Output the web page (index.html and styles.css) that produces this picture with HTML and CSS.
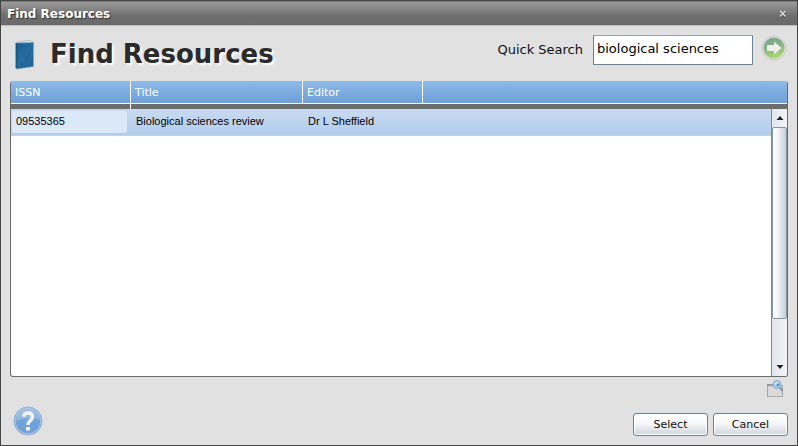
FILE: index.html
```
<!DOCTYPE html>
<html lang="en">
<head>
<meta charset="utf-8">
<title>Find Resources</title>
<link rel="stylesheet" href="styles.css">
</head>
<body>
<div class="dialog" role="dialog" aria-labelledby="heading">
  <header class="titlebar">
    <span>Find Resources</span>
    <button class="close" type="button" aria-label="Close">
      <svg width="8" height="8" viewBox="0 0 8 8"><path d="M1 2l5.500 5.500M6.500 2L1 7.500" stroke="#444" stroke-width="1.500"/><path d="M1 1l5.500 5.500M6.500 1L1 6.500" stroke="#ddd" stroke-width="1.500"/></svg>
    </button>
  </header>
  <main class="content">
    <div class="top">
      <svg class="book" width="22" height="30" viewBox="0 0 22 30">
        <defs><linearGradient id="bk" x1="0" x2="1" y1="0" y2="1"><stop offset="0" stop-color="#1b5c8f"/><stop offset=".5" stop-color="#256b9f"/><stop offset="1" stop-color="#155481"/></linearGradient></defs>
        <path d="M2 2.500L15 .500L19.500 2L19 4L2 4z" fill="#e8efef" stroke="#8fa9b4" stroke-width=".7"/>
        <path d="M1.500 3L19.500 2.500V26.500L3 29L1.500 28z" fill="url(#bk)" stroke="#7fa8c2" stroke-width=".6"/>
        <path d="M3 3.500V28.500" stroke="#124a74" stroke-width=".7"/>
        <path d="M4 8Q7 20 12 27.500L19 26V5Q17 16 12 22Q8 18 4 8z" fill="#3b82b5" opacity=".3"/>
      </svg>
      <h1 id="heading">Find Resources</h1>
      <form class="search">
        <label for="q">Quick Search</label>
        <input id="q" type="text" value="biological sciences">
        <button class="go" type="button" aria-label="Search">
          <svg width="26" height="26" viewBox="0 0 26 26">
            <defs><linearGradient id="gn" x1="0" x2=".3" y1="0" y2="1"><stop offset="0" stop-color="#7da596"/><stop offset=".5" stop-color="#82b084"/><stop offset="1" stop-color="#a9d66f"/></linearGradient></defs>
            <circle cx="13" cy="13" r="12" fill="#e4e4e4" stroke="#c6c6c6"/>
            <circle cx="13" cy="13" r="10.500" fill="url(#gn)"/>
            <path d="M6 10h7V6.500l7.500 6.500l-7.500 6.500V16H6z" fill="#eee"/>
          </svg>
        </button>
      </form>
    </div>
    <section class="grid">
      <table>
        <colgroup><col class="c-issn"><col class="c-title"><col class="c-editor"><col></colgroup>
        <thead>
          <tr><th>ISSN</th><th>Title</th><th>Editor</th><th></th></tr>
        </thead>
        <tbody>
          <tr><td class="focus"><span>09535365</span></td><td>Biological sciences review</td><td>Dr L Sheffield</td><td></td></tr>
        </tbody>
      </table>
      <div class="scrollbar">
        <button type="button" aria-label="Scroll up"><svg width="8" height="4" viewBox="0 0 8 4"><path d="M4 0L7.500 4H.5z" fill="#222"/></svg></button>
        <div class="track"><div class="thumb"></div></div>
        <button type="button" aria-label="Scroll down"><svg width="8" height="4" viewBox="0 0 8 4"><path d="M.5 0h7L4 4z" fill="#222"/></svg></button>
      </div>
    </section>
    <div class="tools">
      <button type="button" aria-label="Preview folder">
        <svg width="18" height="18" viewBox="0 0 18 18">
          <path d="M1.500 4.500h6l1 1h8v11h-15z" fill="#ccc" stroke="#a6a6a6"/>
          <path d="M2 7h14v9H2z" fill="#dadada"/>
          <path d="M1 5h6" stroke="#999" stroke-width="2"/>
          <path d="M1 16.500h16" stroke="#aaa"/>
          <path d="M13 6.500l3.500 4.500" stroke="#7795b5" stroke-width="2"/>
          <circle cx="11" cy="4.500" r="4" fill="#a9d0ef" stroke="#87a7c7"/>
          <path d="M9 4q1-2 3-1.500" stroke="#eef7ff" fill="none"/>
          <path d="M11 6l2-2" stroke="#4e8fd0" stroke-width="2"/>
        </svg>
      </button>
    </div>
    <footer>
      <button class="help" type="button" aria-label="Help">
        <svg width="30" height="30" viewBox="0 0 30 30">
          <defs><linearGradient id="hp" x1="0" x2="0" y1="0" y2="1"><stop offset="0" stop-color="#8fb6e2"/><stop offset=".5" stop-color="#70a2dc"/><stop offset="1" stop-color="#6b9fdb"/></linearGradient></defs>
          <circle cx="15" cy="15" r="14" fill="url(#hp)" stroke="#9db4cf"/>
          <path d="M3 15A12 12 0 0 1 27 14Q15 10 3 15z" fill="#fff" opacity=".18"/>
          <circle cx="15" cy="15" r="12.800" fill="none" stroke="#b9d0ea" stroke-width=".8"/>
          <path d="M10.500 10.800Q11 7 15 7Q19.500 7 19.500 10.800Q19.500 13 17 14.800Q15 16.200 15 19" fill="none" stroke="#f4f4f4" stroke-width="3.400"/>
          <path d="M13 21h4v3.500h-4z" fill="#f4f4f4"/>
        </svg>
      </button>
      <button class="btn" type="button">Select</button>
      <button class="btn" type="button">Cancel</button>
    </footer>
  </main>
</div>
</body>
</html>
```
FILE: styles.css
```
* { box-sizing: border-box; }
body {
  margin: 0;
  font-family: Verdana, "DejaVu Sans", sans-serif;
  font-size: 11px;
  color: #111;
}
button {
  padding: 0;
  border: 0;
  background: none;
  font: inherit;
  color: inherit;
}
svg { display: block; }
.dialog {
  min-height: 100vh;
  display: flex;
  flex-direction: column;
  background: #e1e1e1;
  border: 1px solid #444;
}
.titlebar {
  height: 25px;
  display: flex;
  align-items: center;
  justify-content: space-between;
  padding: 1px 10px 0 6px;
  border-top: 1px solid #777;
  border-bottom: 1px solid #bbb;
  background: linear-gradient(#9b9b9b, #6e6e6e 60%, #6a6a6a);
  color: #fff;
  font-size: 12px;
  font-weight: bold;
  text-shadow: 1px 1px 1px #333;
}
.content {
  flex: 1;
  display: flex;
  flex-direction: column;
  padding: 8px 9px;
}
.top {
  height: 47px;
  display: flex;
  align-items: flex-start;
}
.book { margin: 6px 0 0 4px; }
h1 {
  margin: 4px 0 0 14px;
  font-size: 26px;
  line-height: 32px;
  color: #2b2b2b;
  text-shadow: 2px 2px 2px #fff;
}
.search {
  margin-left: auto;
  display: flex;
  align-items: flex-start;
  font-size: 13px;
  line-height: 32px;
}
.search input {
  width: 160px;
  height: 30px;
  margin: 1px 8px 0 10px;
  padding: 0 3px 2px;
  border: 1px solid #67839c;
  border-top-color: #91a3b4;
  border-radius: 1px;
  background: #fff;
  font: inherit;
  color: #000;
}
.go { margin: 1px 1px 0 0; }
.grid {
  flex: 1;
  position: relative;
  border: 1px solid #6b6b6b;
  border-top: 0;
  border-radius: 3px;
  background: #fff;
  overflow: hidden;
}
table {
  width: 100%;
  table-layout: fixed;
  border-collapse: separate;
  border-spacing: 0;
}
.c-issn { width: 120px; }
.c-title { width: 172px; }
.c-editor { width: 120px; }
th {
  height: 28px;
  padding: 0 5px 6px 4px;
  background:
    linear-gradient(#fff, #fff) right top / 1px 23px no-repeat,
    linear-gradient(#8fb9e6, #6c9fdb 22px, #fff 22px, #fff 23px, #6d6d6d 23px);
  color: #fff;
  font-weight: normal;
  text-align: left;
}
th:first-child { background-size: 1px 28px, auto; }
th:last-child { background-size: 0 0, auto; }
tbody tr { background: linear-gradient(#c8daf0, #b1cdec); }
td {
  height: 27px;
  padding: 0 5px 2px;
  border-bottom: 1px solid #c5d3e0;
  font-family: Arial, "Liberation Sans", sans-serif;
  color: #000;
}
.focus { padding: 2px 4px 2px 1px; }
.focus span {
  display: block;
  height: 22px;
  padding-left: 4px;
  border-radius: 2px;
  background: #dbe8f7;
  line-height: 20px;
}
.scrollbar {
  position: absolute;
  top: 28px;
  right: 0;
  bottom: 0;
  width: 16px;
  display: flex;
  flex-direction: column;
  border-left: 1px solid #7f8993;
  background: linear-gradient(90deg, #e2e5ea, #f2f4f7);
}
.scrollbar button {
  height: 18px;
  display: flex;
  align-items: center;
  justify-content: center;
}
.track { flex: 1; }
.thumb {
  height: 83%;
  border: 1px solid #8795a3;
  border-radius: 2px;
  background: linear-gradient(90deg, #fff, #f0f3f6 40%, #c6ced7);
}
.tools {
  display: flex;
  justify-content: flex-end;
  padding: 3px 4px 0;
}
footer {
  display: flex;
  align-items: flex-end;
  gap: 5px;
  padding-top: 8px;
}
.help { margin: 0 auto 1px 3px; }
.btn {
  width: 75px;
  height: 23px;
  margin-bottom: 1px;
  border: 1px solid #6f8192;
  border-radius: 3px;
  background: linear-gradient(#fff, #f6f7f9 45%, #cfd5dc);
  box-shadow: inset 0 0 0 1px #fff;
}
```
